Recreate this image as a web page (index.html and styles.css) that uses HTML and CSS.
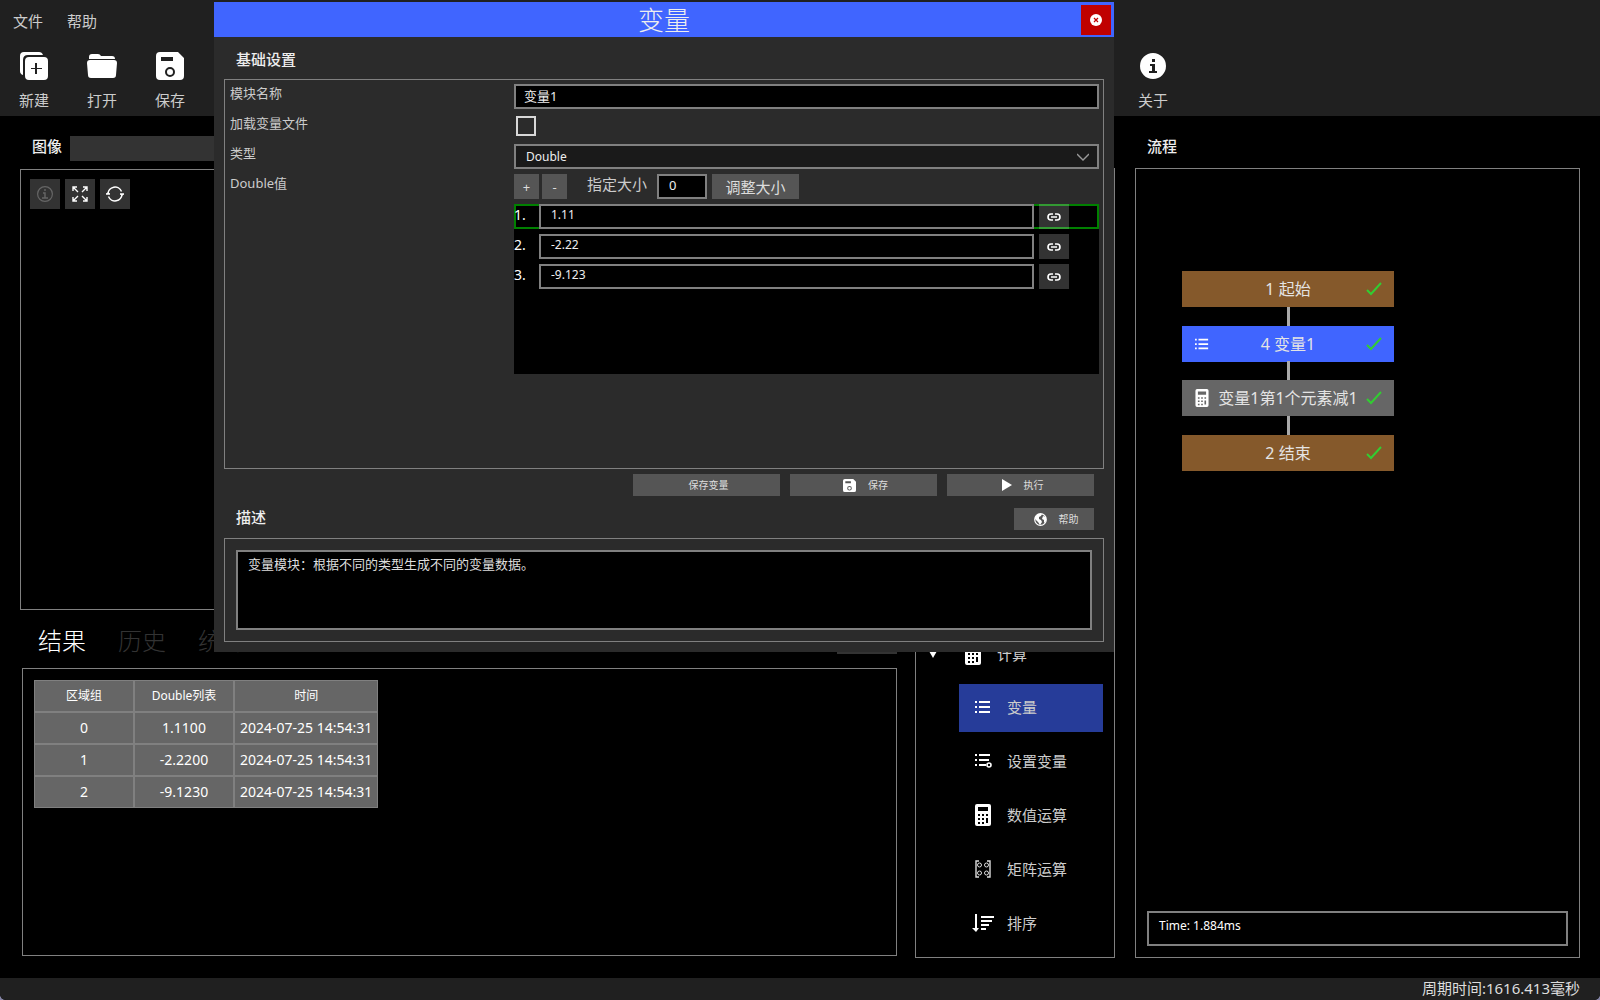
FILE: index.html
```html
<!DOCTYPE html>
<html lang="zh-CN">

<head>
    <meta charset="UTF-8">
    <meta name="viewport" content="width=device-width, initial-scale=1.0">
    <title>变量</title>
    <link rel="stylesheet" href="styles.css">
</head>

<body>
    <!-- Shared icons -->
    <svg class="icon-defs" aria-hidden="true">
        <symbol id="icon-save" viewBox="0 0 28 28">
            <path fill-rule="evenodd" d="M4 0H22L28 6V24Q28 28 24 28H4Q0 28 0 24V4Q0 0 4 0ZM5 5V9H17V5ZM14 15A5 5 0 1 0 14 25A5 5 0 1 0 14 15ZM14 17A3 3 0 1 1 14 23A3 3 0 1 1 14 17Z" />
        </symbol>
        <symbol id="icon-list" viewBox="0 0 16 14">
            <path d="M0 1H2V3H0ZM4 1H15V3H4ZM0 6H2V8H0ZM4 6H15V8H4ZM0 11H2V13H0ZM4 11H15V13H4Z" />
        </symbol>
        <symbol id="icon-calc" viewBox="0 0 16 22">
            <path fill-rule="evenodd" d="M2 0H14Q16 0 16 2V20Q16 22 14 22H2Q0 22 0 20V2Q0 0 2 0ZM3 3V7H13V3ZM3 10V12H5V10ZM7 10V12H9V10ZM11 10V12H13V10ZM3 14V16H5V14ZM7 14V16H9V14ZM11 14V19H13V14ZM3 18V20H5V18ZM7 18V20H9V18Z" />
        </symbol>
        <symbol id="icon-check" viewBox="0 0 16 14">
            <path d="M1 8L5 12L15 1" fill="none" stroke="#32cd32" stroke-width="2" />
        </symbol>
        <symbol id="icon-link" viewBox="0 0 14 8">
            <path d="M6 1H4A3 3 0 0 0 4 7H6M8 1H10A3 3 0 0 1 10 7H8M4 4H10" fill="none" stroke="currentColor" stroke-width="1.6" />
        </symbol>
    </svg>

    <div class="app">
        <header class="topbar">
            <nav class="menu">
                <a href="#">文件</a>
                <a href="#">帮助</a>
            </nav>
            <div class="toolbar">
                <button class="tool-button">
                    <svg width="28" height="28" viewBox="0 0 28 28">
                        <path d="M4 0H19Q22 0 23 3H8Q3 3 3 8V23Q0 22 0 19V4Q0 0 4 0Z" />
                        <path fill-rule="evenodd" d="M9 5H24Q28 5 28 9V24Q28 28 24 28H9Q5 28 5 24V9Q5 5 9 5ZM15 11V16H11V17H15V22H17V17H22V16H17V11Z" />
                    </svg>
                    <span>新建</span>
                </button>
                <button class="tool-button">
                    <svg width="30" height="28" viewBox="0 0 30 28">
                        <path d="M2 7V5Q2 2 5 2H11Q13 2 14 4H25Q28 4 28 7Z" />
                        <path d="M3 8H27Q30 8 30 11L29 23Q29 26 26 26H4Q1 26 1 23L0 11Q0 8 3 8Z" />
                    </svg>
                    <span>打开</span>
                </button>
                <button class="tool-button">
                    <svg width="28" height="28"><use href="#icon-save" /></svg>
                    <span>保存</span>
                </button>
                <button class="tool-button about">
                    <svg width="26" height="28" viewBox="0 0 26 28">
                        <path fill-rule="evenodd" d="M13 1A13 13 0 1 0 13 27A13 13 0 1 0 13 1ZM12 7H15V10H12ZM10 12H15V19H17V21H9V19H12V14H10Z" />
                    </svg>
                    <span>关于</span>
                </button>
            </div>
        </header>

        <main class="workspace">
            <section class="left-column">
                <div class="panel-title">
                    <h2>图像</h2>
                    <div class="image-bar"></div>
                </div>
                <div class="image-frame">
                    <button class="square-button" aria-label="信息" disabled>
                        <svg width="18" height="18" viewBox="0 0 18 18" fill="none" stroke="currentColor">
                            <circle cx="9" cy="9" r="7.4" stroke-width="1.2" />
                            <path d="M9 4V6M7 8H9V13M6 13H12" stroke-width="1.4" />
                        </svg>
                    </button>
                    <button class="square-button" aria-label="适应窗口">
                        <svg width="16" height="16" viewBox="0 0 16 16" fill="none" stroke="currentColor" stroke-width="1.4">
                            <path d="M1 5V1H5M1 1L6 6M11 1H15V5M15 1L10 6M1 11V15H5M1 15L6 10M11 15H15V11M15 15L10 10" />
                        </svg>
                    </button>
                    <button class="square-button" aria-label="刷新">
                        <svg width="18" height="16" viewBox="0 0 18 16" fill="none" stroke="currentColor" stroke-width="1.5">
                            <path d="M2 8A7 7 0 0 1 15.5 5.5M16 8A7 7 0 0 1 2.5 10.5" />
                            <path d="M0 8L2 6L4 8ZM14 8L16 10L18 8Z" fill="currentColor" stroke="none" />
                            <path d="M0 8H4M14 8H18" />
                        </svg>
                    </button>
                </div>
                <nav class="tabs">
                    <button class="tab active">结果</button>
                    <button class="tab">历史</button>
                    <button class="tab">统计</button>
                    <span class="tab-action"></span>
                </nav>
                <div class="result-frame">
                    <table class="result-table">
                        <thead>
                            <tr><th>区域组</th><th>Double列表</th><th>时间</th></tr>
                        </thead>
                        <tbody>
                            <tr><td>0</td><td>1.1100</td><td>2024-07-25 14:54:31</td></tr>
                            <tr><td>1</td><td>-2.2200</td><td>2024-07-25 14:54:31</td></tr>
                            <tr><td>2</td><td>-9.1230</td><td>2024-07-25 14:54:31</td></tr>
                        </tbody>
                    </table>
                </div>
            </section>

            <section class="module-column">
                <div class="module-frame">
                    <div class="module-group">
                        <span class="arrow"></span>
                        <svg width="16" height="22"><use href="#icon-calc" /></svg>
                        <span>计算</span>
                    </div>
                    <ul class="module-list">
                        <li><a class="module-item selected" href="#"><svg width="16" height="14"><use href="#icon-list" /></svg>变量</a></li>
                        <li><a class="module-item" href="#">
                            <svg width="17" height="16" viewBox="0 0 17 16">
                                <path d="M0 1H2V3H0ZM4 1H15V3H4ZM0 6H2V8H0ZM4 6H14V8H4ZM0 11H2V13H0ZM4 11H11V13H4Z" />
                                <circle cx="14" cy="12" r="2" fill="none" stroke="#fff" stroke-width="1.6" />
                            </svg>设置变量</a></li>
                        <li><a class="module-item" href="#"><svg width="16" height="22"><use href="#icon-calc" /></svg>数值运算</a></li>
                        <li><a class="module-item" href="#">
                            <svg width="16" height="18" viewBox="0 0 16 18" fill="none" stroke="#ddd">
                                <path d="M4 1H1V17H4M12 1H15V17H12" stroke-width="1.4" />
                                <circle cx="4.5" cy="5" r="2" /><circle cx="11.5" cy="5" r="2" />
                                <circle cx="4.5" cy="13" r="2" /><circle cx="11.5" cy="13" r="2" />
                            </svg>矩阵运算</a></li>
                        <li><a class="module-item" href="#">
                            <svg width="22" height="18" viewBox="0 0 22 18">
                                <path d="M3 0H5V14H7L4 18L0 14H3ZM9 2H22V4H9ZM9 6H20V8H9ZM9 10H17V12H9ZM9 14H14V16H9Z" />
                            </svg>排序</a></li>
                    </ul>
                </div>
            </section>

            <section class="flow-column">
                <div class="panel-title">
                    <h2>流程</h2>
                </div>
                <div class="flow-frame">
                    <div class="flow-chart">
                        <div class="node terminal">
                            <span></span><span>1 起始</span>
                            <svg width="16" height="14"><use href="#icon-check" /></svg>
                        </div>
                        <div class="node current">
                            <svg width="14" height="14"><use href="#icon-list" /></svg><span>4 变量1</span>
                            <svg width="16" height="14"><use href="#icon-check" /></svg>
                        </div>
                        <div class="node">
                            <svg width="14" height="18"><use href="#icon-calc" /></svg><span>变量1第1个元素减1</span>
                            <svg width="16" height="14"><use href="#icon-check" /></svg>
                        </div>
                        <div class="node terminal">
                            <span></span><span>2 结束</span>
                            <svg width="16" height="14"><use href="#icon-check" /></svg>
                        </div>
                    </div>
                    <div class="time-box">Time: 1.884ms</div>
                </div>
            </section>
        </main>

        <footer class="statusbar">周期时间:1616.413毫秒</footer>
    </div>

    <!-- Variable settings window -->
    <div class="dialog" role="dialog" aria-labelledby="dialog-title">
        <div class="dialog-header">
            <h1 id="dialog-title">变量</h1>
            <button class="close-button" aria-label="关闭">
                <svg width="12" height="12" viewBox="0 0 12 12">
                    <circle cx="6" cy="6" r="6" />
                    <path d="M4 4L8 8M8 4L4 8" stroke="#c00000" stroke-width="1.2" />
                </svg>
            </button>
        </div>
        <form class="dialog-body">
            <div class="section-title">
                <h2>基础设置</h2>
            </div>
            <div class="settings">
                <label for="name">模块名称</label>
                <input type="text" id="name" class="field" value="变量1">

                <label for="load">加载变量文件</label>
                <input type="checkbox" id="load" class="checkbox">

                <label for="type">类型</label>
                <select id="type" class="field">
                    <option>Double</option>
                </select>

                <span>Double值</span>
                <div class="size-row">
                    <button type="button" class="flat-button step">+</button>
                    <button type="button" class="flat-button step">-</button>
                    <label for="size">指定大小</label>
                    <input type="text" id="size" class="field size-field" value="0">
                    <button type="button" class="flat-button resize">调整大小</button>
                </div>

                <ol class="value-list">
                    <li class="value-row selected">
                        <label for="value1">1.</label>
                        <input type="text" id="value1" class="field" value="1.11">
                        <button type="button" class="link-button" aria-label="链接"><svg width="14" height="8"><use href="#icon-link" /></svg></button>
                    </li>
                    <li class="value-row">
                        <label for="value2">2.</label>
                        <input type="text" id="value2" class="field" value="-2.22">
                        <button type="button" class="link-button" aria-label="链接"><svg width="14" height="8"><use href="#icon-link" /></svg></button>
                    </li>
                    <li class="value-row">
                        <label for="value3">3.</label>
                        <input type="text" id="value3" class="field" value="-9.123">
                        <button type="button" class="link-button" aria-label="链接"><svg width="14" height="8"><use href="#icon-link" /></svg></button>
                    </li>
                </ol>
            </div>

            <div class="actions">
                <button type="button" class="flat-button action">保存变量</button>
                <button type="button" class="flat-button action"><svg width="13" height="13"><use href="#icon-save" /></svg>保存</button>
                <button type="button" class="flat-button action"><svg width="10" height="12" viewBox="0 0 10 12"><path d="M0 0L10 6L0 12Z" /></svg>执行</button>
            </div>

            <div class="section-title with-button">
                <h2><label for="description">描述</label></h2>
                <button type="button" class="flat-button action help">
                    <svg width="13" height="13" viewBox="0 0 13 13">
                        <circle cx="6.5" cy="6.5" r="5.8" fill="none" stroke="#fff" stroke-width="1.2" />
                        <path d="M1 4L4 1L8 1L7 3L5 4L5 6L7 7L8 9L6 12L4 9L1 6ZM9 3L12 4L12 8L10 10L10 7L8 6Z" />
                    </svg>帮助
                </button>
            </div>
            <div class="description-frame">
                <textarea id="description" class="field" readonly>变量模块：根据不同的类型生成不同的变量数据。</textarea>
            </div>
        </form>
    </div>
</body>

</html>
```
FILE: styles.css
```css
/* General styling */
* {
    box-sizing: border-box;
}

html {
    background-color: #8585a5;
}

body {
    margin: 0;
    font-family: "Noto Sans", "Noto Sans CJK SC", sans-serif;
    font-size: 15px;
    line-height: 20px;
    color: #ccc;
}

h1,
h2,
ul,
ol {
    margin: 0;
    padding: 0;
}

ul,
ol {
    list-style: none;
}

h2 {
    font-size: 15px;
    font-weight: 500;
    line-height: 24px;
    color: #eee;
}

a {
    color: inherit;
    text-decoration: none;
}

button,
input,
select,
textarea {
    margin: 0;
    padding: 0;
    border: 0;
    border-radius: 0;
    font: inherit;
    color: inherit;
}

button {
    cursor: pointer;
}

svg {
    display: block;
    flex: none;
    fill: #fff;
}

svg[fill="none"] {
    fill: none;
}

.icon-defs {
    position: absolute;
    width: 0;
    height: 0;
}

.app {
    display: flex;
    flex-direction: column;
    min-height: 100vh;
    background-color: #000;
    border-radius: 0 0 6px 6px;
    overflow: hidden;
}

/* Top bar */
.topbar {
    height: 116px;
    background-color: #202020;
}

.menu {
    display: flex;
    gap: 24px;
    padding: 11px 13px 0;
}

.toolbar {
    display: flex;
    padding: 21px 0 0 13px;
}

.tool-button {
    display: flex;
    flex-direction: column;
    align-items: center;
    gap: 10px;
    width: 42px;
    margin-right: 26px;
    background: none;
}

.tool-button.about {
    margin-left: 915px;
}

/* Main area */
.workspace {
    flex: 1;
    display: grid;
    grid-template-columns: minmax(0, 877fr) 200px minmax(0, 447fr);
    gap: 18px;
    padding: 0 20px 20px;
}

.left-column {
    display: grid;
    grid-template-rows: 53px 441fr 58px 288fr;
    padding-bottom: 2px;
}

.panel-title {
    display: flex;
    align-items: flex-start;
    gap: 8px;
    padding: 18px 0 0 12px;
}

.image-bar {
    flex: 1;
    height: 25px;
    margin-top: 2px;
    background-color: #333;
}

.image-frame,
.result-frame,
.module-frame,
.flow-frame {
    border: 1px solid #808080;
}

.image-frame {
    display: flex;
    gap: 5px;
    padding: 9px;
}

.square-button {
    display: flex;
    align-items: center;
    justify-content: center;
    width: 30px;
    height: 30px;
    background-color: #333;
    color: #fff;
}

.square-button:disabled {
    color: #666;
}

.tabs {
    display: flex;
    align-items: center;
    gap: 32px;
    padding: 4px 0 0 18px;
}

.tab {
    background: none;
    font-size: 24px;
    font-weight: 300;
    line-height: 32px;
    color: #333;
}

.tab.active {
    color: #fff;
}

.tab-action {
    width: 60px;
    height: 25px;
    margin-left: auto;
    background-color: #333;
}

.result-frame {
    margin-left: 2px;
    padding: 11px;
}

.result-table {
    border-collapse: separate;
    border-spacing: 0;
    font-size: 14px;
    color: #fff;
}

.result-table th,
.result-table td {
    min-width: 100px;
    height: 32px;
    padding: 0 5px;
    border: 1px solid #808080;
    background-color: #666;
    text-align: center;
}

.result-table th {
    font-size: 12px;
    font-weight: 400;
}

/* Module list */
.module-column {
    padding-top: 52px;
}

.module-frame {
    display: flex;
    flex-direction: column;
    justify-content: flex-end;
    height: 100%;
    padding: 0 11px 9px;
}

.module-group {
    display: flex;
    align-items: center;
    gap: 16px;
    height: 48px;
    margin-bottom: 6px;
    padding-left: 2px;
}

.arrow {
    width: 8px;
    margin-right: 12px;
    border: 4px solid transparent;
    border-top: 7px solid #fff;
    border-bottom: 0;
}

.module-list {
    display: flex;
    flex-direction: column;
    gap: 6px;
    margin-left: 32px;
}

.module-item {
    display: grid;
    grid-template-columns: 48px 1fr;
    align-items: center;
    height: 48px;
    padding-bottom: 2px;
}

.module-item svg {
    justify-self: center;
}

.module-item.selected {
    background-color: #263c99;
}

/* Flow chart */
.flow-column {
    display: flex;
    flex-direction: column;
    padding-left: 2px;
}

.flow-column .panel-title {
    height: 52px;
}

.flow-frame {
    flex: 1;
    display: flex;
    flex-direction: column;
    justify-content: space-between;
    padding: 102px 11px 11px;
}

.flow-chart {
    display: flex;
    flex-direction: column;
    justify-content: space-between;
    width: 212px;
    height: 200px;
    margin-left: 35px;
}

.node {
    display: grid;
    grid-template-columns: 36px 140px 36px;
    align-items: center;
    justify-items: center;
    height: 36px;
    background-color: #666;
    font-size: 16px;
    white-space: nowrap;
    color: #e4e4e4;
}

.node svg:first-child {
    margin-left: 4px;
}

.node svg:last-child {
    margin-right: 4px;
}

/* Connector above each following node */
.node + .node {
    position: relative;
}

.node + .node::before {
    content: "";
    position: absolute;
    bottom: 100%;
    left: 105px;
    width: 3px;
    height: 19px;
    background-color: #a9a9a9;
}

.node.terminal {
    background-color: #85592b;
}

.node.current {
    background-color: #4065ff;
}

.time-box {
    height: 35px;
    padding: 3px 10px;
    border: 2px solid #808080;
    font-size: 12px;
    color: #fff;
}

.statusbar {
    height: 22px;
    padding-right: 20px;
    background-color: #202020;
    line-height: 20px;
    text-align: right;
    color: #ddd;
}

/* Dialog */
.dialog {
    position: absolute;
    top: 2px;
    left: 214px;
    display: flex;
    flex-direction: column;
    width: 900px;
    height: 650px;
    background-color: #2b2b2b;
    font-size: 13px;
}

.dialog-header {
    display: grid;
    grid-template-columns: 30px 1fr 30px;
    align-items: center;
    height: 35px;
    padding: 0 3px;
    background-color: #4065ff;
}

.dialog-header h1 {
    grid-column: 2;
    padding-top: 2px;
    font-size: 26px;
    font-weight: 300;
    line-height: 33px;
    text-align: center;
    color: #eee;
}

.close-button {
    display: flex;
    align-items: center;
    justify-content: center;
    height: 30px;
    background-color: #c00000;
}

.dialog-body {
    flex: 1;
    display: flex;
    flex-direction: column;
    padding: 0 10px 10px;
}

.section-title {
    display: flex;
    align-items: flex-end;
    justify-content: space-between;
    height: 42px;
    padding: 0 10px 8px 12px;
}

.section-title.with-button h2 {
    line-height: 26px;
}

.settings {
    flex: 1;
    display: grid;
    grid-template-columns: 284px 1fr;
    grid-template-rows: repeat(4, 25px) 170px;
    row-gap: 5px;
    padding: 4px 4px 4px 5px;
    border: 1px solid #808080;
    line-height: 18px;
}

.field {
    width: 100%;
    height: 25px;
    padding: 0 8px 2px;
    border: 2px solid #808080;
    background-color: #000;
    color: #eee;
    outline: none;
}

select.field {
    appearance: none;
    padding: 0 10px;
    background: #1a1a1a url("data:image/svg+xml,%3Csvg xmlns='http://www.w3.org/2000/svg' width='12' height='8'%3E%3Cpath d='M0 1L6 7L12 1' fill='none' stroke='%23999' stroke-width='1.4'/%3E%3C/svg%3E") no-repeat right 8px center;
    font-size: 12px;
}

.checkbox {
    appearance: none;
    width: 20px;
    height: 20px;
    margin: 2px;
    border: 2px solid #d8d8d8;
}

.checkbox:checked {
    background-color: #4065ff;
}

.size-row {
    display: flex;
    font-size: 15px;
    line-height: 20px;
}

.size-row label {
    margin: 0 10px 0 17px;
}

.flat-button {
    background-color: #555;
    color: #ddd;
}

.step {
    width: 25px;
    margin-right: 3px;
    font-size: 13px;
}

.size-field {
    width: 50px;
    margin-right: 5px;
    padding: 0 10px 4px;
    font-size: 13px;
}

.resize {
    width: 87px;
}

.value-list {
    grid-column: 2;
    display: flex;
    flex-direction: column;
    gap: 5px;
    background-color: #000;
}

.value-row {
    display: grid;
    grid-template-columns: 25px 1fr 30px;
    height: 25px;
    padding-right: 30px;
}

.value-row.selected {
    box-shadow: inset 0 0 0 2px #008000;
}

.value-row label {
    font-size: 14px;
    line-height: 22px;
    color: #fff;
}

.value-row .field {
    width: auto;
    margin-right: 5px;
    padding: 0 10px 4px;
    font-size: 12px;
}

.link-button {
    display: flex;
    align-items: center;
    justify-content: center;
    background-color: rgba(255, 255, 255, 0.2);
    color: #fff;
}

.actions {
    display: flex;
    justify-content: flex-end;
    gap: 10px;
    padding: 5px 10px 0;
}

.action {
    display: flex;
    align-items: center;
    justify-content: center;
    gap: 12px;
    width: 147px;
    height: 22px;
    padding-left: 4px;
    font-size: 10px;
}

.action.help {
    width: 80px;
}

.description-frame {
    padding: 11px;
    border: 1px solid #808080;
}

.description-frame .field {
    display: block;
    height: 80px;
    padding: 2px 10px;
    color: #ddd;
    resize: none;
}
```
